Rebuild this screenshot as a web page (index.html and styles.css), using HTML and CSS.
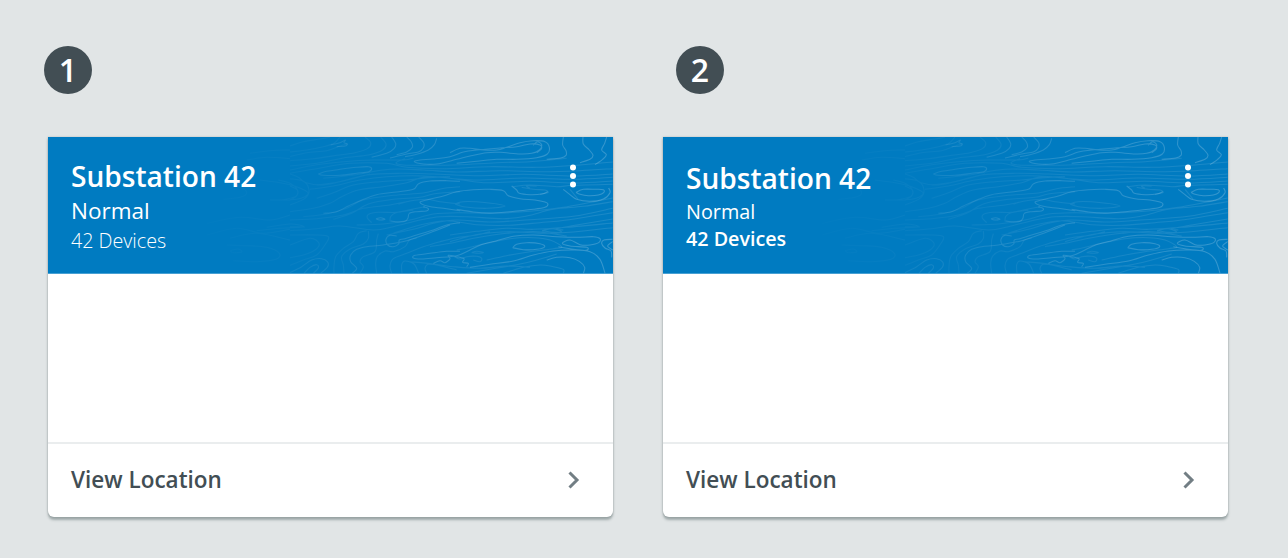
FILE: index.html
```html
<!DOCTYPE html>
<html lang="en">
<head>
<meta charset="utf-8">
<title>Substation cards</title>
<link rel="stylesheet" href="styles.css">
</head>
<body>
<svg class="defs" width="0" height="0" aria-hidden="true">
  <defs>
    <linearGradient id="fade" gradientUnits="userSpaceOnUse" x1="-330" y1="0" x2="970" y2="0">
      <stop offset="0" stop-color="#fff" stop-opacity="0"/>
      <stop offset=".25" stop-color="#fff" stop-opacity=".06"/>
      <stop offset=".6" stop-color="#fff" stop-opacity=".15"/>
      <stop offset="1" stop-color="#fff" stop-opacity=".21"/>
    </linearGradient>
  </defs>
  <symbol id="contours" viewBox="0 0 565 136.5">
    <g transform="translate(242 -7) scale(.33333)" fill="none" stroke="url(#fade)" stroke-width="3.2" stroke-linejoin="round">
      <path id="fine-lines" opacity=".5"/>
      <path id="bold-lines"/>
    </g>
  </symbol>
</svg>
<main class="examples">
  <section class="example">
    <span class="marker marker-first">1</span>
    <article class="card">
      <header class="card-header">
        <svg class="contours" aria-hidden="true"><use href="#contours"/></svg>
        <div class="titles">
          <h2 class="title">Substation 42</h2>
          <p class="status">Normal</p>
          <p class="devices">42 Devices</p>
        </div>
        <svg class="more" viewBox="0 0 8 24"><circle cx="4" cy="3.5" r="3"/><circle cx="4" cy="12.1" r="3"/><circle cx="4" cy="20.6" r="3"/></svg>
      </header>
      <div class="card-body"></div>
      <footer class="card-footer">
        <span class="action">View Location</span>
        <svg class="chevron" viewBox="0 0 12 18"><path d="M1.5 1.5 9 9 1.5 16.5"/></svg>
      </footer>
    </article>
  </section>
  <section class="example">
    <span class="marker marker-second">2</span>
    <article class="card card-alt">
      <header class="card-header">
        <svg class="contours" aria-hidden="true"><use href="#contours"/></svg>
        <div class="titles">
          <h2 class="title">Substation 42</h2>
          <p class="status">Normal</p>
          <p class="devices">42 Devices</p>
        </div>
        <svg class="more" viewBox="0 0 8 24"><circle cx="4" cy="3.5" r="3"/><circle cx="4" cy="12.1" r="3"/><circle cx="4" cy="20.6" r="3"/></svg>
      </header>
      <div class="card-body"></div>
      <footer class="card-footer">
        <span class="action">View Location</span>
        <svg class="chevron" viewBox="0 0 12 18"><path d="M1.5 1.5 9 9 1.5 16.5"/></svg>
      </footer>
    </article>
  </section>
</main>
<script src="contours.js"></script>
</body>
</html>
```

FILE: contours.js
```js
// Each string is one contour line: x y pairs joined by a smooth curve.
const bold = [
  "122 45 150 38 166 30 162 38 172 42 165 48 140 50",
  "305 21 317 40 312 56 290 70 245 82",
  "350 21 364 36 367 52 350 66 320 74",
  "386 21 401 38 400 54 385 66 350 72 300 84",
  "440 25 433 44 415 60 380 73 345 80",
  "730 46 742 35 755 44 748 60 725 70 690 72 630 67 590 68 540 78 500 88 440 102 400 102 373 95 390 90 430 87 480 80 520 66 560 60 630 54 680 50 720 42 750 45 754 57 740 68",
  "480 68 510 55 540 55 580 60 620 60 650 52 690 38 730 32 765 35 778 52 772 72 740 83 680 88 620 88 560 94 500 100",
  "820 21 818 45 828 62 828 76 812 84 770 88",
  "879 21 880 42 898 60 909 76 900 88 870 98",
  "950 21 944 40 935 60 949 74 938 88 915 104",
  "85 132 110 124 150 118 200 112 235 110 245 116 236 125 200 130 150 136 100 136 85 132",
  "100 250 140 245 175 228 210 212 260 194 320 186 370 178 386 161 420 153 470 152 510 154",
  "510 242 460 235 415 229 390 217 410 210 460 198 500 185 550 179 600 178 640 182 655 197 690 206 735 210 765 216 774 222 765 232 730 238 660 245 600 249 550 246 500 238",
  "665 168 680 180 688 190 720 194 755 192 773 185",
  "858 187 880 178 915 178 940 179 941 188 925 195 895 197 870 193 858 187",
  "820 178 840 194 860 208 900 214 940 207 960 188 956 174",
  "400 230 415 236 409 243 380 245 358 250 354 264 345 274 325 276 302 273",
  "258 266 272 263 285 268 268 270 258 266",
  "320 318 300 316 288 328 293 345 310 350 326 342 328 330 345 326 380 315 430 300 470 285 510 278",
  "187 430 200 415 182 395 182 375 200 358 230 350 280 345 350 332 420 308 480 285",
  "510 364 470 364 420 370 375 376 370 384 395 387 440 383 500 377 540 360 570 346 620 332 670 319 730 315 800 320 860 322 910 320 930 326 926 338 900 345 870 344 840 330 817 340 840 348 890 352 889 361 850 358 805 350",
  "430 400 450 392 465 398 480 386 475 376 500 380 522 386 518 397 535 400 530 410",
  "668 353 680 343 710 338 750 341 764 350 740 358 700 359 668 353",
  "968 328 942 330 935 340 945 354 963 363 965 382",
  "968 335 953 348 968 360",
  "540 412 600 403 670 393 730 375 790 363 850 360 900 365 930 388 945 430",
  "770 390 800 382 840 383 868 394 884 412 880 430",
  "0 428 35 410 65 390 95 386 113 396 112 412 92 430",
  "42 430 60 412 80 404 85 414 70 430"
];
const fine = [
  "0 48 40 35 90 27 120 21", "0 80 50 68 110 62 150 48 172 42", "150 21 132 40 100 50 50 60 0 66",
  "225 21 242 38 232 56 195 68 140 76 70 86 0 92", "272 21 288 42 278 60 235 75 160 84 80 100 0 108",
  "0 120 80 104 160 95 250 90 340 90 370 84", "345 86 318 98 340 105 420 106 510 104 620 98 720 95 830 85",
  "0 130 80 116 180 100 290 100 350 112 460 116 600 110 740 112 870 105 968 96",
  "100 145 190 135 300 118 400 120 500 126 630 122 760 125 870 122 968 116",
  "80 165 150 155 230 135 330 130 430 132 570 137 700 133 850 138 968 132",
  "60 178 130 168 210 150 290 140 400 138 550 150 700 144 850 148 968 142",
  "80 205 130 188 190 165 270 155 350 150 450 142 580 158 720 154 850 159 968 153",
  "0 132 25 142 48 158 100 165 170 150 240 132", "0 146 40 154 57 180 45 205 0 225",
  "0 168 22 180 20 198 0 210", "0 245 70 235 120 220 155 200 205 180 280 170 350 158 400 142 480 140",
  "40 260 110 252 170 235 220 210 310 196 400 189 455 176 510 170",
  "130 268 185 250 235 222 310 208 390 202 430 192 510 185",
  "325 222 360 213 410 208 450 215 510 222", "0 270 80 266 160 255 220 235 300 225 350 215",
  "245 278 232 264 236 253 265 247 320 247 355 240 405 230", "300 275 302 260 318 248 370 240",
  "0 290 45 291", "0 302 80 296 150 288 250 300 310 290 390 270 450 260 530 260 640 266 710 258 790 238 880 229 968 215",
  "200 285 280 282 360 270 430 252 510 248 610 250 720 244 820 232 968 204",
  "290 315 370 298 430 280 500 270 600 276 720 269 850 259 968 235",
  "310 310 390 285 470 272 560 284 650 286 750 278 830 270 968 248",
  "756 302 790 296 815 306 790 307 756 302", "820 300 800 297 860 285 968 267",
  "480 315 560 304 650 295 730 298 830 292 968 279", "480 335 570 312 660 305 760 310 850 306 968 293",
  "495 222 520 215 590 218 645 228 590 235 520 230 495 222", "695 172 730 178 765 180 774 188 750 193",
  "670 170 720 165 800 170 850 166 968 163", "840 178 850 190 864 207", "720 175 710 168 740 168",
  "0 315 80 315 115 320 108 340 80 375 40 390 0 406", "0 345 60 325 87 340 75 360 40 375 0 383",
  "132 430 132 410 137 380 160 355 190 335 205 310 230 302", "162 430 160 405 155 380 180 357 220 342 235 325 235 303",
  "210 430 220 410 210 395 220 380 255 365 260 330 265 311", "260 430 257 400 262 380 285 363 310 365 345 350 358 330 380 325",
  "305 430 300 408 310 386 350 370 400 350 450 335 500 323 560 315 600 305",
  "386 430 372 402 345 393 335 405 336 430", "410 430 405 415 415 403 450 407 500 420",
  "420 350 480 340 560 323 650 310 740 305 830 318", "360 395 430 402 490 410 570 415 650 408 720 412",
  "493 380 510 387 530 380 560 379 575 385 570 395 550 390", "545 368 560 364 580 367 565 370 545 368",
  "640 430 700 412 750 405 790 410 820 418 820 430", "530 430 600 418 690 402 740 390 800 372",
  "500 360 535 353 590 340 660 326 730 323 780 330 815 350 790 356 720 365 650 377 590 390",
  "-190 160 -150 170 -130 188 -150 202 -200 208", "-90 150 -30 158 20 170 55 190 20 208 -60 210",
  "-35 150 0 160 22 180 16 200 -25 210", "-100 302 -30 295 40 290 0 282 -70 292",
  "-190 345 -130 347 -70 352 -32 370 -42 388 -100 395 -170 392", "-180 362 -155 357 -145 366 -170 368 -180 362",
  "-120 70 -60 62 0 60", "-130 90 -70 82 0 86", "-250 280 -150 262 -60 270 0 255", "-180 325 -100 310 0 330", "-250 315 -160 295 -80 310 0 298"
];

function curve(text) {
  const n = text.split(" ").map(Number);
  const p = [];
  for (let i = 0; i < n.length; i += 2) p.push([n[i], n[i + 1]]);
  let d = "M" + p[0];
  for (let i = 0; i < p.length - 1; i++) {
    const a = p[i - 1] || p[i], b = p[i], c = p[i + 1], e = p[i + 2] || c;
    d += "C" + [b[0] + (c[0] - a[0]) / 6, b[1] + (c[1] - a[1]) / 6,
      c[0] - (e[0] - b[0]) / 6, c[1] - (e[1] - b[1]) / 6, c[0], c[1]].join(" ");
  }
  return d;
}

document.getElementById("bold-lines").setAttribute("d", bold.map(curve).join(""));
document.getElementById("fine-lines").setAttribute("d", fine.map(curve).join(""));
```

FILE: styles.css
```css
* { box-sizing: border-box; }
body {
  margin: 0;
  min-height: 558px;
  background: #e1e5e6;
  color: #424e54;
  font-family: "Open Sans", "Noto Sans", sans-serif;
  overflow: hidden;
}
.defs { position: absolute; }
.examples { display: flex; gap: 50px; padding: 46px 0 0 48px; }
.example { width: 565px; }
.marker {
  display: flex;
  align-items: center;
  justify-content: center;
  width: 48px;
  height: 48px;
  border-radius: 50%;
  background: #424e54;
  color: #fff;
  font-size: 32px;
  line-height: 48px;
  font-weight: 600;
}
.marker-first { margin-left: -4px; }
.marker-second { margin-left: 13px; }
.card {
  display: flex;
  flex-direction: column;
  height: 379.5px;
  margin-top: 43px;
  background: #fff;
  border-radius: 0 0 6px 6px;
  box-shadow: 0 2.5px 2.5px rgba(66, 84, 84, .4), 0 0 2px rgba(66, 84, 84, .3);
}
.card-header {
  position: relative;
  display: flex;
  justify-content: space-between;
  height: 136.5px;
  padding: 21px 36px 0 23px;
  border-bottom: 1px solid #47a0d3;
  background: #007bc1;
  color: #fff;
}
.contours { position: absolute; inset: 0; width: 565px; height: 136.5px; }
.titles { position: relative; }
.title, .status, .devices { margin: 0; white-space: nowrap; }
.title { font-size: 28.1px; line-height: 36px; font-weight: 600; }
.status { padding-top: 1px; font-size: 22.5px; line-height: 32px; font-weight: 400; }
.devices { font-size: 19.7px; line-height: 28px; font-weight: 300; }
.card-alt .title { padding-top: 2px; }
.card-alt .status { padding-top: 2px; font-size: 19.8px; line-height: 28px; }
.card-alt .devices { font-size: 19.7px; line-height: 26px; font-weight: 600; }
.more { position: relative; width: 8px; height: 24px; margin-top: 6px; fill: #fff; }
.card-body { flex: 1; }
.card-footer {
  display: flex;
  align-items: center;
  justify-content: space-between;
  height: 74.5px;
  padding: 0 33px 0 23px;
  border-top: 2px solid #eaedee;
}
.action { font-size: 22.5px; line-height: 32px; font-weight: 600; }
.chevron { width: 12px; height: 18px; fill: none; stroke: #727e84; stroke-width: 3; }
```
